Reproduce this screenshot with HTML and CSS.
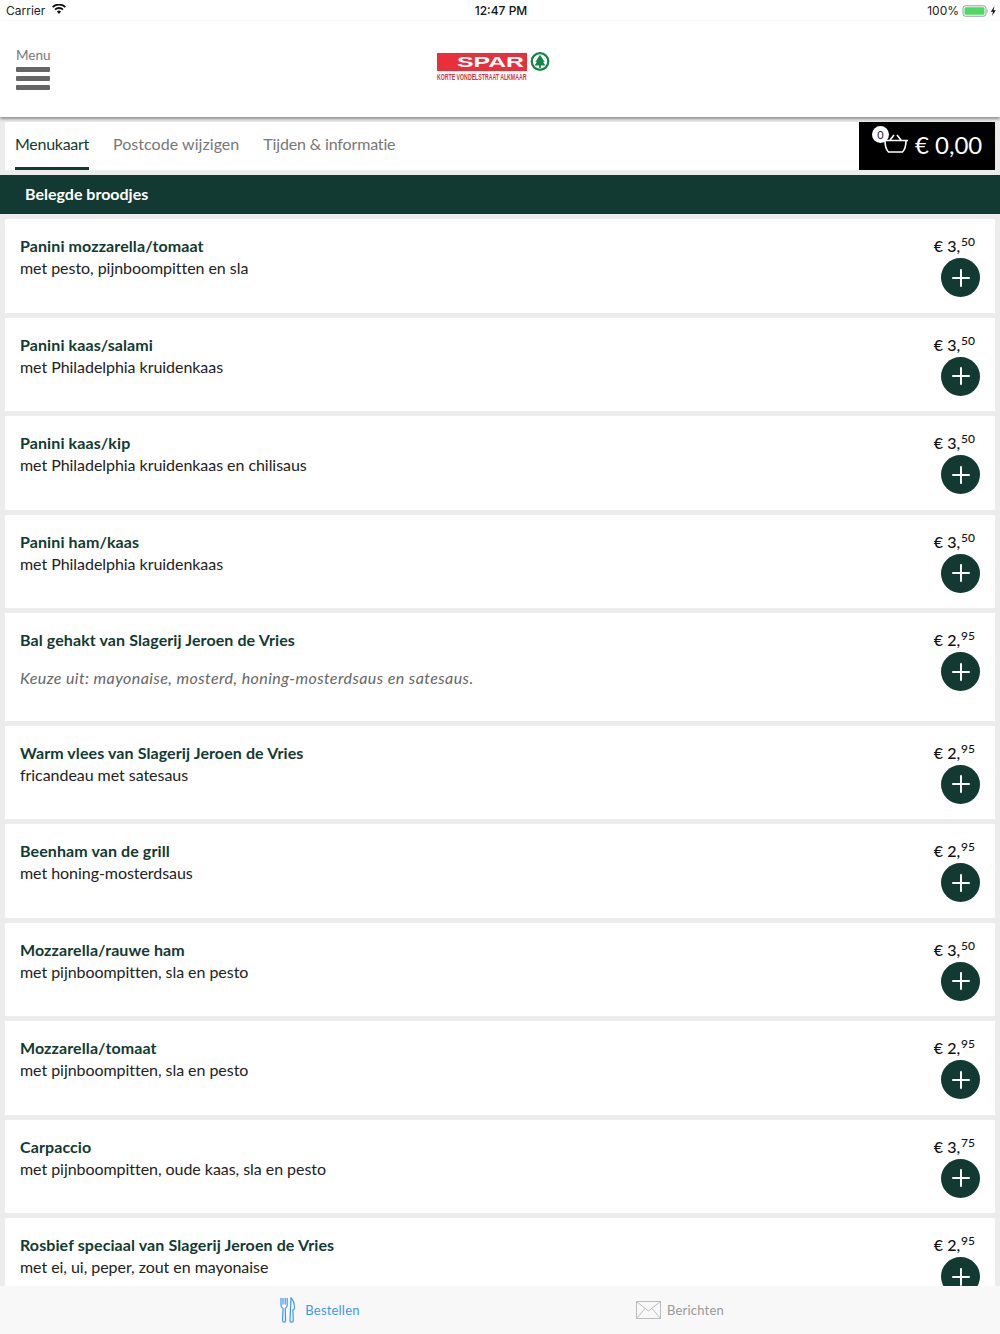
FILE: index.html
```html
<!DOCTYPE html>
<html lang="nl">
<head>
<meta charset="utf-8">
<title>Menukaart</title>
<link rel="stylesheet" href="styles.css">
</head>
<body>
<div class="app">
  <div class="status">
    <div class="st-left">Carrier
      <svg class="wifi" width="14" height="10" viewBox="0 0 14 10"><path d="M7 10 4.900 7.600a3 3 0 0 1 4.200 0zM3.700 6.300 2.400 4.900a6.600 6.600 0 0 1 9.200 0l-1.300 1.400a4.700 4.700 0 0 0-6.600 0zM1.300 3.800 0 2.400a10 10 0 0 1 14 0l-1.300 1.400a8.200 8.200 0 0 0-11.400 0z" fill="#111"/></svg>
    </div>
    <div class="st-time">12:47 PM</div>
    <div class="st-right">100%
      <svg width="34" height="12" viewBox="0 0 34 12"><rect x="1" y=".8" width="23" height="10.400" rx="2.400" fill="none" stroke="#999"/><rect x="2.500" y="2.200" width="20" height="7.600" rx="1.200" fill="#4cd964"/><path d="M25.200 4.200c1 .3 1 3.300 0 3.600z" fill="#999"/><path d="M32.500 1 28.800 6.700h2.200L30 11l3.800-5.800h-2.300z" fill="#111"/></svg>
    </div>
  </div>
  <header class="top">
    <div class="menu-btn">
      <span class="menu-label">Menu</span>
      <span class="bar"></span><span class="bar"></span><span class="bar"></span>
    </div>
    <div class="logo">
      <svg width="116" height="32" viewBox="0 0 116 32">
        <rect x="1" y="1" width="90" height="18" fill="#e8303c"/>
        <text x="21" y="15" class="logo-spar" textLength="67" lengthAdjust="spacingAndGlyphs">SPAR</text>
        <text x="1" y="15.550" transform="scale(1 1.800)" class="logo-sub">KORTE VONDELSTRAAT ALKMAAR</text>
        <circle cx="104" cy="9.500" r="8.300" fill="#fff" stroke="#14854a" stroke-width="2.200"/>
        <path d="M104 2.800 99.300 10l1.600-.2-2.300 3.800h4.500V16h1.800v-2.400h4.500l-2.300-3.800 1.600.2z" fill="#14854a"/>
      </svg>
    </div>
  </header>
  <nav class="tabs">
    <div class="tab-list">
      <a class="tab tab-active">Menukaart</a>
      <a class="tab">Postcode wijzigen</a>
      <a class="tab tab-info">Tijden &amp; informatie</a>
    </div>
    <div class="cart">
      <span class="cart-count">0</span>
      <svg class="cart-icon" width="27" height="22" viewBox="0 0 27 22" fill="none" stroke="#fff" stroke-width="1.600"><path d="M1 8.500h25M3 8.500c0 5 1 9 3.500 11.500h14C23 17.500 24 13.500 24 8.500M8 8l4-5M19 8l-4-5"/></svg>
      <span class="cart-total">€ 0,00</span>
    </div>
  </nav>
  <h2 class="section">Belegde broodjes</h2>
  <main class="list">
    <article class="item"><div class="info"><h3>Panini mozzarella/tomaat</h3><p>met pesto, pijnboompitten en sla</p></div><div class="buy"><div class="price">€ 3,<sup>50</sup></div><button class="add"><svg viewBox="0 0 24 24"><path d="M12 1.500v21M1.500 12h21"/></svg></button></div></article>
    <article class="item"><div class="info"><h3>Panini kaas/salami</h3><p>met Philadelphia kruidenkaas</p></div><div class="buy"><div class="price">€ 3,<sup>50</sup></div><button class="add"><svg viewBox="0 0 24 24"><path d="M12 1.500v21M1.500 12h21"/></svg></button></div></article>
    <article class="item"><div class="info"><h3>Panini kaas/kip</h3><p>met Philadelphia kruidenkaas en chilisaus</p></div><div class="buy"><div class="price">€ 3,<sup>50</sup></div><button class="add"><svg viewBox="0 0 24 24"><path d="M12 1.500v21M1.500 12h21"/></svg></button></div></article>
    <article class="item"><div class="info"><h3>Panini ham/kaas</h3><p>met Philadelphia kruidenkaas</p></div><div class="buy"><div class="price">€ 3,<sup>50</sup></div><button class="add"><svg viewBox="0 0 24 24"><path d="M12 1.500v21M1.500 12h21"/></svg></button></div></article>
    <article class="item item-note"><div class="info"><h3>Bal gehakt van Slagerij Jeroen de Vries</h3><p class="note">Keuze uit: mayonaise, mosterd, honing-mosterdsaus en satesaus.</p></div><div class="buy"><div class="price">€ 2,<sup>95</sup></div><button class="add"><svg viewBox="0 0 24 24"><path d="M12 1.500v21M1.500 12h21"/></svg></button></div></article>
    <article class="item"><div class="info"><h3>Warm vlees van Slagerij Jeroen de Vries</h3><p>fricandeau met satesaus</p></div><div class="buy"><div class="price">€ 2,<sup>95</sup></div><button class="add"><svg viewBox="0 0 24 24"><path d="M12 1.500v21M1.500 12h21"/></svg></button></div></article>
    <article class="item"><div class="info"><h3>Beenham van de grill</h3><p>met honing-mosterdsaus</p></div><div class="buy"><div class="price">€ 2,<sup>95</sup></div><button class="add"><svg viewBox="0 0 24 24"><path d="M12 1.500v21M1.500 12h21"/></svg></button></div></article>
    <article class="item"><div class="info"><h3>Mozzarella/rauwe ham</h3><p>met pijnboompitten, sla en pesto</p></div><div class="buy"><div class="price">€ 3,<sup>50</sup></div><button class="add"><svg viewBox="0 0 24 24"><path d="M12 1.500v21M1.500 12h21"/></svg></button></div></article>
    <article class="item"><div class="info"><h3>Mozzarella/tomaat</h3><p>met pijnboompitten, sla en pesto</p></div><div class="buy"><div class="price">€ 2,<sup>95</sup></div><button class="add"><svg viewBox="0 0 24 24"><path d="M12 1.500v21M1.500 12h21"/></svg></button></div></article>
    <article class="item"><div class="info"><h3>Carpaccio</h3><p>met pijnboompitten, oude kaas, sla en pesto</p></div><div class="buy"><div class="price">€ 3,<sup>75</sup></div><button class="add"><svg viewBox="0 0 24 24"><path d="M12 1.500v21M1.500 12h21"/></svg></button></div></article>
    <article class="item"><div class="info"><h3>Rosbief speciaal van Slagerij Jeroen de Vries</h3><p>met ei, ui, peper, zout en mayonaise</p></div><div class="buy"><div class="price">€ 2,<sup>95</sup></div><button class="add"><svg viewBox="0 0 24 24"><path d="M12 1.500v21M1.500 12h21"/></svg></button></div></article>
  </main>
  <footer class="tabbar">
    <a class="bar-item bar-active">
      <svg width="15" height="26" viewBox="0 0 15 26" fill="none" stroke="#3f97f5" stroke-width="1.200"><path d="M1 1v7c0 2 1 3 2 3.500L2.600 23.500c0 2.200 3 2.200 3 0l-.4-12c1-.5 2-1.500 2-3.500V1M3 1v6.500M5.200 1v6.500M11 1c2.500 2 3.400 6 3.400 10 0 1.500-.8 2-1.500 2.200l.4 10.300c0 2.200-3.300 2.200-3.300 0z"/></svg>
      <span>Bestellen</span>
    </a>
    <a class="bar-item">
      <svg width="25" height="18" viewBox="0 0 25 18" fill="none" stroke="#bbb" stroke-width="1"><rect x=".5" y=".5" width="24" height="17"/><path d="M.5.500 12.500 10 24.500.500M.5 17.500l8.500-10M24.500 17.500 16 7.500"/></svg>
      <span>Berichten</span>
    </a>
  </footer>
</div>
</body>
</html>
```
FILE: styles.css
```css
* { box-sizing: border-box; }
html, body { margin: 0; height: 100%; }
body { font-family: "Lato", "Noto Sans", sans-serif; background: #ececec; overflow: hidden; }
.app { height: 1334px; display: flex; flex-direction: column; overflow: hidden; }

.status { height: 21px; flex: none; background: #fff; display: grid; grid-template-columns: 1fr auto 1fr; align-items: center; padding: 0 4px 0 6px; font-family: "Inter", "Liberation Sans", sans-serif; font-size: 12px; color: #222; }
.st-left { display: flex; align-items: center; gap: 7px; }
.wifi { margin-top: -3px; }
.st-time { font-weight: 500; color: #111; }
.st-right { display: flex; justify-content: flex-end; align-items: center; gap: 3px; }

.top { height: 96px; flex: none; background: #fff; position: relative; display: flex; align-items: flex-start; justify-content: center; padding-top: 31px; box-shadow: 0 2px 3px rgba(0,0,0,.4); z-index: 1; }
.menu-btn { position: absolute; left: 16px; top: 27px; width: 34px; display: flex; flex-direction: column; gap: 4px; }
.menu-label { font-size: 13.500px; line-height: 15px; color: #777; text-align: center; }
.bar { display: block; height: 5px; background: #666; border-radius: 1px; }
.logo { width: 116px; height: 32px; margin-left: -13px; }
.logo svg { display: block; }
.logo-spar { font-family: "Liberation Sans", sans-serif; font-weight: 700; font-size: 14px; fill: #fff; }
.logo-sub { font-family: "Liberation Sans", sans-serif; font-weight: 700; font-size: 5.200px; fill: #d8303c; }

.tabs { flex: none; height: 48px; margin: 5px 5px 0; background: #fff; display: flex; justify-content: space-between; }
.tab-list { display: flex; gap: 24px; padding-left: 10px; }
.tab { height: 48px; line-height: 43px; font-size: 16px; letter-spacing: .05px; color: #777; }
.tab-active { color: #123a32; letter-spacing: -.28px; border-bottom: 3px solid #123a32; }
.tab-info { letter-spacing: -.15px; }
.cart { width: 136px; background: #000; color: #fff; position: relative; display: flex; align-items: center; padding-left: 23px; }
.cart-count { position: absolute; left: 13px; top: 4px; width: 17px; height: 17px; border-radius: 50%; background: #fff; color: #222; font-size: 11px; line-height: 17px; text-align: center; z-index: 1; }
.cart-icon { margin-top: -6px; }
.cart-total { font-size: 24px; line-height: 44px; margin: -2px 0 0 6px; font-weight: 400; white-space: nowrap; }

.section { flex: none; margin: 5px 0 5px; height: 39px; line-height: 37px; padding-left: 25px; background: #123a32; color: #fff; font-size: 16px; font-weight: 700; }

.list { flex: 1; min-height: 0; overflow: hidden; padding: 0 5px; display: flex; flex-direction: column; gap: 5px; }
.item { flex: none; height: 93.500px; background: #fff; display: flex; justify-content: space-between; padding: 17px 15px 0; }
.item-note { height: 107.500px; }
.info h3 { margin: 0; font-size: 16px; line-height: 20px; font-weight: 700; letter-spacing: .1px; color: #123a32; }
.info p { margin: 2px 0 0; font-size: 16px; line-height: 20px; letter-spacing: -.05px; color: #222; }
.info .note { margin-top: 18px; font-style: italic; letter-spacing: .42px; color: #666; }
.buy { display: flex; flex-direction: column; align-items: flex-end; width: 60px; }
.price { font-size: 16px; line-height: 20px; margin: 0 5px 0 0; font-weight: 500; color: #111; white-space: nowrap; }
.price sup { font-size: 12px; line-height: 0; vertical-align: 6px; margin-left: 1px; }
.add { width: 39px; height: 39px; margin-top: 2px; border: 0; padding: 9.500px; border-radius: 50%; background: #123a32; display: block; }
.add svg { display: block; width: 20px; height: 20px; fill: none; stroke: #fff; stroke-width: 2.400; }

.tabbar { flex: none; height: 48px; background: #f8f8f8; display: grid; grid-template-columns: 1fr 1fr; padding: 0 140px; position: relative; z-index: 1; }
.bar-item { display: flex; align-items: center; justify-content: center; gap: 6px; font-size: 13px; letter-spacing: .2px; color: #999; }
.bar-active { gap: 10px; color: #3f97f5; }
```
